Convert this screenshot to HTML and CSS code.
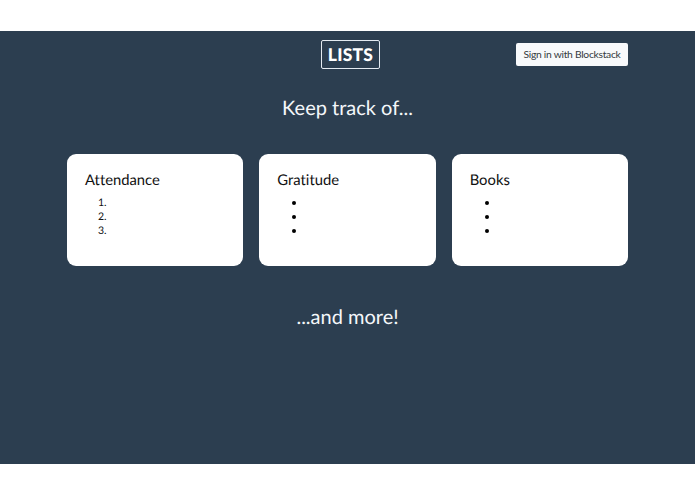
FILE: index.html
```html
<!DOCTYPE html>
<html lang="en">
<head>
<meta charset="utf-8">
<title>Lists</title>
<link rel="stylesheet" href="styles.css">
</head>
<body>
<main class="page">
  <header class="header">
    <div class="logo"><span>LISTS</span></div>
    <button class="signin"><span>Sign in with Blockstack</span></button>
  </header>
  <h1 class="headline"><span>Keep track of...</span></h1>
  <section class="cards">
    <article class="card">
      <h2>Attendance</h2>
      <ol class="items"><li>1.</li><li>2.</li><li>3.</li></ol>
    </article>
    <article class="card">
      <h2>Gratitude</h2>
      <ul class="items dots"><li></li><li></li><li></li></ul>
    </article>
    <article class="card">
      <h2>Books</h2>
      <ul class="items dots"><li></li><li></li><li></li></ul>
    </article>
  </section>
  <p class="headline more"><span>...and more!</span></p>
</main>
</body>
</html>
```
FILE: styles.css
```css
* { box-sizing: border-box; }
body {
  margin: 0;
  padding-top: 31px;
  background: #fff;
  font-family: Lato, "Open Sans", sans-serif;
  font-variant-ligatures: none;
  text-rendering: geometricPrecision;
}
.page {
  height: 433px;
  padding: 9px 67px 0;
  background: #2c3e50;
}
.header {
  display: grid;
  grid-template-columns: 254px 59px 1fr;
  align-items: start;
  height: 55px;
}
.logo {
  grid-column: 2;
  display: flex;
  align-items: center;
  justify-content: center;
  height: 29px;
  border: 1.5px solid #e4ebf2;
  border-radius: 2px;
  color: #fff;
  font-size: 17.5px;
  font-weight: 900;
  letter-spacing: .2px;
  line-height: 29px;
}
.signin {
  justify-self: end;
  width: 112px;
  height: 23px;
  margin-top: 3px;
  padding: 0;
  border: 0;
  border-radius: 2px;
  background: #f8f9fb;
  color: #35393e;
  font: 10.3px/21px Lato, sans-serif;
  letter-spacing: -.28px;
  white-space: nowrap;
}
.headline {
  margin: 0;
  color: #f4f7fa;
  text-align: center;
  font-size: 20px;
  font-weight: 400;
  line-height: 26px;
}
.cards {
  display: grid;
  grid-template-columns: repeat(3, 1fr);
  gap: 16px;
  margin-top: 33px;
}
.card {
  height: 112px;
  padding: 17px 18px;
  border-radius: 9px;
  background: #fff;
  color: #111;
}
.card h2 {
  margin: 0 0 6px;
  font-size: 14.8px;
  font-weight: 400;
  line-height: 19px;
}
.items {
  margin: 0;
  padding: 0 0 0 13px;
  list-style: none;
  font-size: 10.5px;
  line-height: 15px;
}
.items li { height: 14px; }
.dots { padding-left: 15px; }
.dots li {
  display: flex;
  align-items: center;
}
.dots li::before {
  content: "";
  width: 4px;
  height: 4px;
  border-radius: 50%;
  background: #000;
}
.more { margin-top: 38px; }
```
